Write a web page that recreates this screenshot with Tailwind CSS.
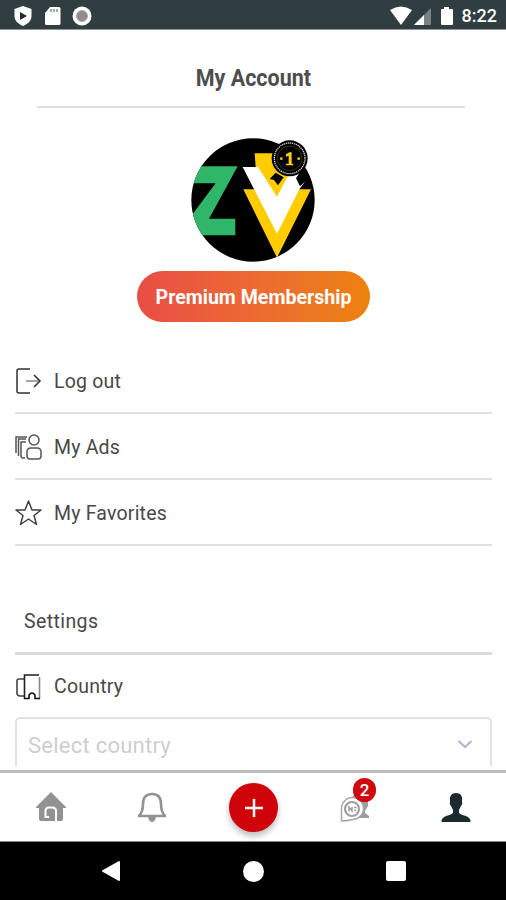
<!DOCTYPE html>
<html lang="en">
<head>
<meta charset="utf-8">
<title>My Account</title>
<script src="https://cdn.jsdelivr.net/npm/@tailwindcss/browser@4"></script>
</head>
<body class="w-[506px] h-[900px] overflow-hidden bg-white font-[Roboto,sans-serif] text-[#484848] flex flex-col">
<header class="h-[30px] shrink-0 bg-[#303d41] border-b border-[#8f9698] flex items-center justify-between pl-[13px] pr-[9px] pt-[2px]">
  <div class="flex items-center">
    <svg class="w-5 h-[22px]" viewBox="0 0 20 22"><path d="M10 1 18.500 4v7c0 5-4 8-8.500 10-4.500-2-8.500-5-8.500-10V4z" fill="#fff"/><path d="M7 7v8l7-4z" fill="#202b2e"/></svg>
    <svg class="w-[18px] h-[22px] ml-[11px]" viewBox="0 0 18 22"><path d="M6 2h9q1.500 0 1.500 1.500v15q0 1.500-1.500 1.500H2.500Q1 20 1 18.500V8z" fill="#fff"/><path d="M7 4v3M10 4v3M13 4v3" stroke="#879093" stroke-width="1.500"/></svg>
    <svg class="w-5 h-[22px] ml-[10px]" viewBox="0 0 20 22"><circle cx="10" cy="11" r="9.500" fill="#fff"/><circle cx="10" cy="11" r="5.500" fill="#8d8d8d" stroke="#aaa" /></svg>
  </div>
  <div class="flex items-center">
    <svg class="w-[24px] h-[20px]" viewBox="0 0 24 20"><path d="M1 4Q12-3 23 4L12 19z" fill="#fff"/></svg>
    <svg class="w-[19px] h-[20px]" viewBox="0 0 19 20"><path d="M1 19 18 2v17z" fill="#78827f"/><path d="M1 19 11 9v10z" fill="#fff"/></svg>
    <svg class="w-[14px] h-[20px] ml-[8px]" viewBox="0 0 14 20"><path d="M4 1h5v2h3q1 0 1 1v14q0 1-1 1H2q-1 0-1-1V4q0-1 1-1h2z" fill="#fff"/></svg>
    <span class="text-white text-[18px] font-medium leading-5 ml-[8px]">8:22</span>
  </div>
</header>

<main class="h-[740px] shrink-0 overflow-hidden">
  <h1 class="mx-[37px] mr-[41px] h-[78px] border-b-2 border-[#dedede] flex items-center justify-center pt-[19px] pl-[5px] text-2xl font-bold text-[#4d4d4d]"><span class="inline-block scale-x-[0.895] whitespace-nowrap">My Account</span></h1>
  <div class="flex flex-col items-center pt-[30px]">
    <svg class="w-[124px] h-[124px]" viewBox="35 23 372 372">
      <defs><clipPath id="disc"><circle cx="221" cy="209" r="185"/></clipPath></defs>
      <g clip-path="url(#disc)">
        <rect x="30" y="20" width="390" height="390" fill="#000"/>
        <path d="M35 108H175L89 265H168V315H35V258L109 159H35z" fill="#2fb668"/>
        <path d="M226 69H362L344 110 293 210 229 110z" fill="#fc0"/>
        <path d="M192 177H232L293 300 353 177H395L293 382z" fill="#fc0"/>
        <path d="M190 110H236L293 199 340 110H350L376 155 360 177 293 310z" fill="#fff"/>
      </g>
      <path d="M289 127 271 146 284 149 296 165 313 141zM362 125 350 144 362 168 385 146z" fill="#000"/>
      <circle cx="331" cy="84" r="54" fill="#000"/>
      <circle cx="331" cy="84" r="46" fill="none" stroke="#ccc" stroke-width="4" stroke-dasharray="4 2"/>
      <circle cx="331" cy="84" r="37" fill="none" stroke="#5a4c18" stroke-width="2"/>
      <path d="M320 72 330 66H337V100H342V105H320V100H328V76L320 79z" fill="#fc0"/>
      <circle cx="306" cy="85" r="4" fill="#fc0"/><circle cx="358" cy="85" r="4" fill="#fc0"/>
    </svg>
    <button class="mt-[9px] ml-[1px] w-[233px] h-[51px] pt-[2px] rounded-full bg-linear-to-r from-[#e94d44] to-[#ed820b] text-white font-bold text-[19.600px]">Premium Membership</button>
  </div>
  <ul class="mx-[15px] mr-[14px] mt-[26px] text-[19.500px]">
    <li class="h-[66px] flex items-center border-b-2 border-[#e0e0e0] tracking-[0.2px] pt-[3px]">
      <svg class="w-[27px] h-[28px] mr-3 -mt-[2px]" viewBox="0 0 27 28" fill="none" stroke="#303030" stroke-width="1.500"><path d="M15 2H4Q2 2 2 4V24Q2 26 4 26H15"/><path d="M11 14H25" stroke="#888"/><path d="M19 8l6 6-6 6"/></svg>Log out</li>
    <li class="h-[66px] flex items-center border-b-2 border-[#e0e0e0] tracking-[0.2px] pt-[3px]">
      <svg class="w-[27px] h-[28px] mr-3 -mt-[2px]" viewBox="0 0 27 28" fill="none" stroke="#555" stroke-width="1.500"><path d="M1 20V4H12M3.500 23V6H11M10 25H8Q6 25 6 22V9H11"/><circle cx="19" cy="7" r="5"/><path d="M16 15H22Q26 15 26 19V23Q26 26 23 26H15Q12 26 12 23V19Q12 15 16 15z"/></svg>My Ads</li>
    <li class="h-[66px] flex items-center border-b-2 border-[#e0e0e0] tracking-[0.2px] pt-[3px]">
      <svg class="w-[27px] h-[28px] mr-3 -mt-[2px]" viewBox="0 0 27 28" fill="none" stroke="#404040" stroke-width="1.500" stroke-linejoin="round"><path d="M13.500 2 17 11H26L19 16.500 21.500 25.500 13.500 20 5.500 25.500 8 16.500 1 11H10z"/></svg>My Favorites</li>
  </ul>
  <h2 class="mx-[15px] mr-[14px] mt-[42px] h-[67px] border-b-[3px] border-[#dadada] pl-[9px] pt-[3px] flex items-center text-[19.500px] tracking-[0.4px]">Settings</h2>
  <div class="mx-[15px] mr-[14px] h-[62px] flex items-center pt-[2px] text-[19.500px] tracking-[0.2px]">
    <svg class="w-[27px] h-[28px] mr-3" viewBox="0 0 27 28" fill="none" stroke="#444" stroke-width="1.600"><path d="M9 6H4Q2 6 2 8V20Q2 23 5 23H9"/><path d="M9.500 26V2H24" stroke="#222"/><path d="M24.500 4V26" stroke="#888"/><path d="M9 25.500H14V22Q17 18 20 22V25.500H25" stroke="#111"/></svg>Country</div>
  <div class="mx-[15px] mr-[14px] h-[49px] overflow-hidden">
    <div class="h-[60px] border-2 border-[#e2e2e2] rounded-[5px] flex justify-between pl-[11px] pr-[17px] pt-[11px] text-[22px] leading-8 tracking-[0.25px] text-[#cecece]">
      <span>Select country</span>
      <svg class="w-[16px] h-[12px] mt-[9px]" viewBox="0 0 16 12" fill="none" stroke="#b6b2d1" stroke-width="2.200"><path d="M1.500 2l6.500 6 6.500-6"/></svg>
    </div>
  </div>
</main>

<nav class="h-[72px] shrink-0 border-t-[3px] border-[#bdbdbd] bg-white border-b-[1px] border-b-[#888] grid grid-cols-5 items-center justify-items-center">
  <svg class="w-[30px] h-[32px]" viewBox="0 0 30 32"><path d="M15 1 30 16V17H27V28Q27 30 24 30H6Q3 30 3 28V17H0V16z" fill="#929292"/><path d="M13 26H9.500V20Q9.500 16.500 13 16.500H16Q20 16.500 20 20V30.500" fill="none" stroke="#fff" stroke-width="2"/></svg>
  <svg class="w-[30px] h-[32px]" viewBox="0 0 30 32"><path d="M2 25Q6 21 6 13 6 3 15 3 24 3 24 13 24 21 28 25z" fill="none" stroke="#939393" stroke-width="2.600" stroke-linejoin="round"/><path d="M11 26H19Q18 31 15 31 12 31 11 26z" fill="#939393"/></svg>
  <div class="w-[49px] h-[49px] mt-px ml-[2px] rounded-full bg-[#cf0309] shadow-[0_4px_6px_#0004] flex items-center justify-center"><svg class="w-[18px] h-[18px]" viewBox="0 0 18 18"><path d="M9 0V18M0 9H18" stroke="#fff" stroke-width="2.500"/></svg></div>
  <div class="relative w-[30px] h-[32px] ml-[2px]">
    <svg class="w-[30px] h-[32px]" viewBox="0 0 30 32"><path d="M12 7Q14 2 20 2 27 2 28 8V15L25 20V22L29 25V27H18z" fill="#9d9d9d"/><path d="M1.500 30V18A11 11 0 1 1 12 28.500Q7 30 1.500 30z" fill="#fff" stroke="#a7a7a7" stroke-width="1.500"/><circle cx="12" cy="18" r="7" fill="#fff" stroke="#a0a0a0" stroke-width="2.200"/><path d="M9 20.500V16L12 20V16M14 16.500H16.500M14 19.500H16" stroke="#999" stroke-width="1.400" fill="none"/></svg>
    <span class="absolute left-[13px] -top-[13px] w-[23px] h-[24px] rounded-full bg-[#cd0a10] text-white text-[17px] font-medium leading-[25px] text-center">2</span>
  </div>
  <svg class="w-[30px] h-[32px] ml-[2px]" viewBox="0 0 30 32"><path d="M15 2Q22 2 21 10 22 13 20 15L18 19V22Q20 24 25 25 30 27 29.500 31H.5Q0 27 5 25 10 24 12 22V19L10 15Q8 13 9 10 8 2 15 2z" fill="#1e2a30"/></svg>
</nav>
<footer class="h-[58px] shrink-0 bg-black flex items-center justify-between pl-[101px] pr-[100px]">
  <svg class="w-5 h-[22px]" viewBox="0 0 20 22"><path d="M2 11 18 2V20z" fill="#fff" stroke="#fff" stroke-width="2" stroke-linejoin="round"/></svg>
  <div class="w-[21px] h-[21px] rounded-full bg-white"></div>
  <div class="w-5 h-5 rounded-[2px] bg-white"></div>
</footer>
</body>
</html>
